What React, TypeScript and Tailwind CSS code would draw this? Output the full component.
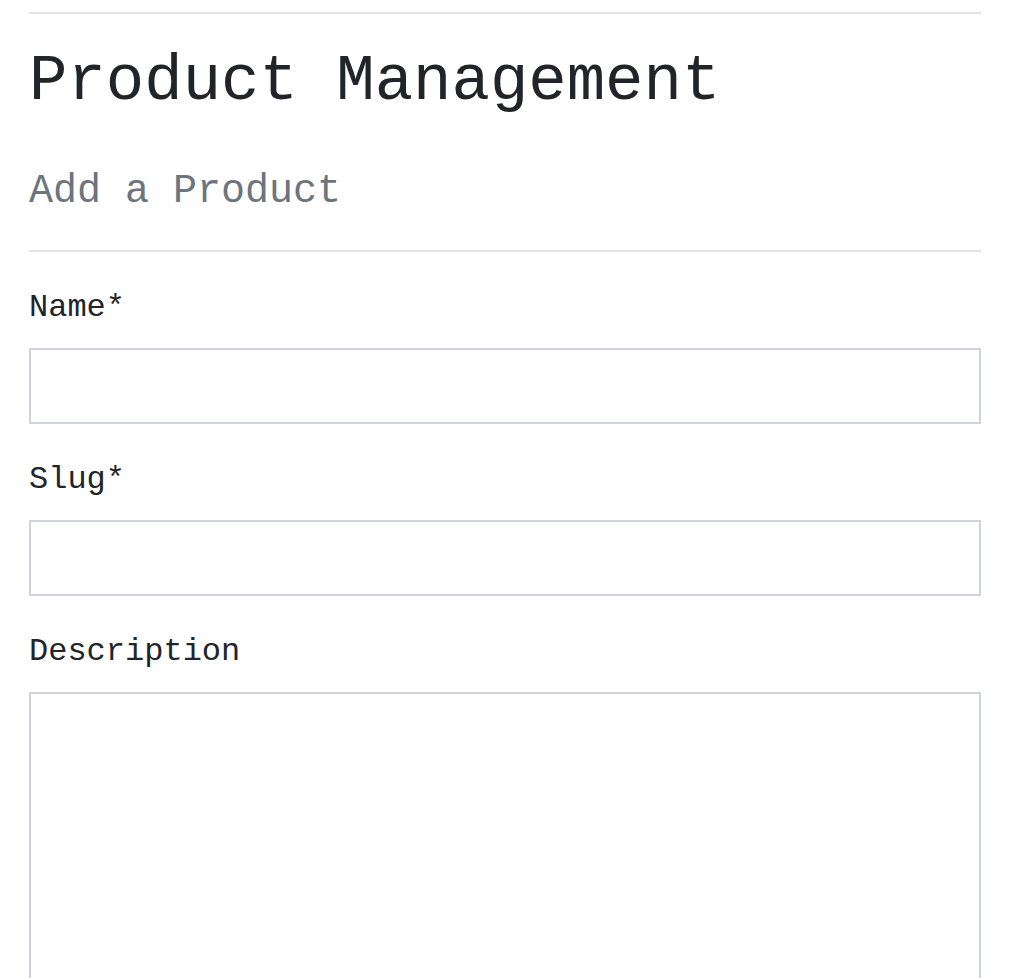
export default function App() {
  return (
    <div className="min-h-screen bg-white font-['Liberation_Mono',monospace] text-[#212529]">
      <div className="ml-[29px] w-[952px]">
        <hr className="mt-[12px] h-[2px] border-0 bg-[#e2e3e5]" />

        <h1 className="mt-[30px] text-[64px] leading-[1.2] font-normal">Product Management</h1>
        <h2 className="mt-[47px] text-[40px] leading-[1.2] font-normal text-[#6c757d]">Add a Product</h2>

        <hr className="mt-[34px] h-[2px] border-0 bg-[#e2e3e5]" />

        <form className="flex flex-col">
          <Field label="Name*" />
          <Field label="Slug*" />
          <div className="mt-[32px] flex flex-col">
            <label className="text-[32px] leading-[1.5]">Description</label>
            <textarea className="mt-[16px] h-[400px] w-full border-2 border-[#ced4da] bg-white outline-none resize-none" />
          </div>
        </form>
      </div>
    </div>
  );
}

function Field({ label }: { label: string }) {
  return (
    <div className="mt-[32px] flex flex-col">
      <label className="text-[32px] leading-[1.5]">{label}</label>
      <input
        type="text"
        className="mt-[16px] h-[76px] w-full border-2 border-[#ced4da] bg-white outline-none"
      />
    </div>
  );
}
